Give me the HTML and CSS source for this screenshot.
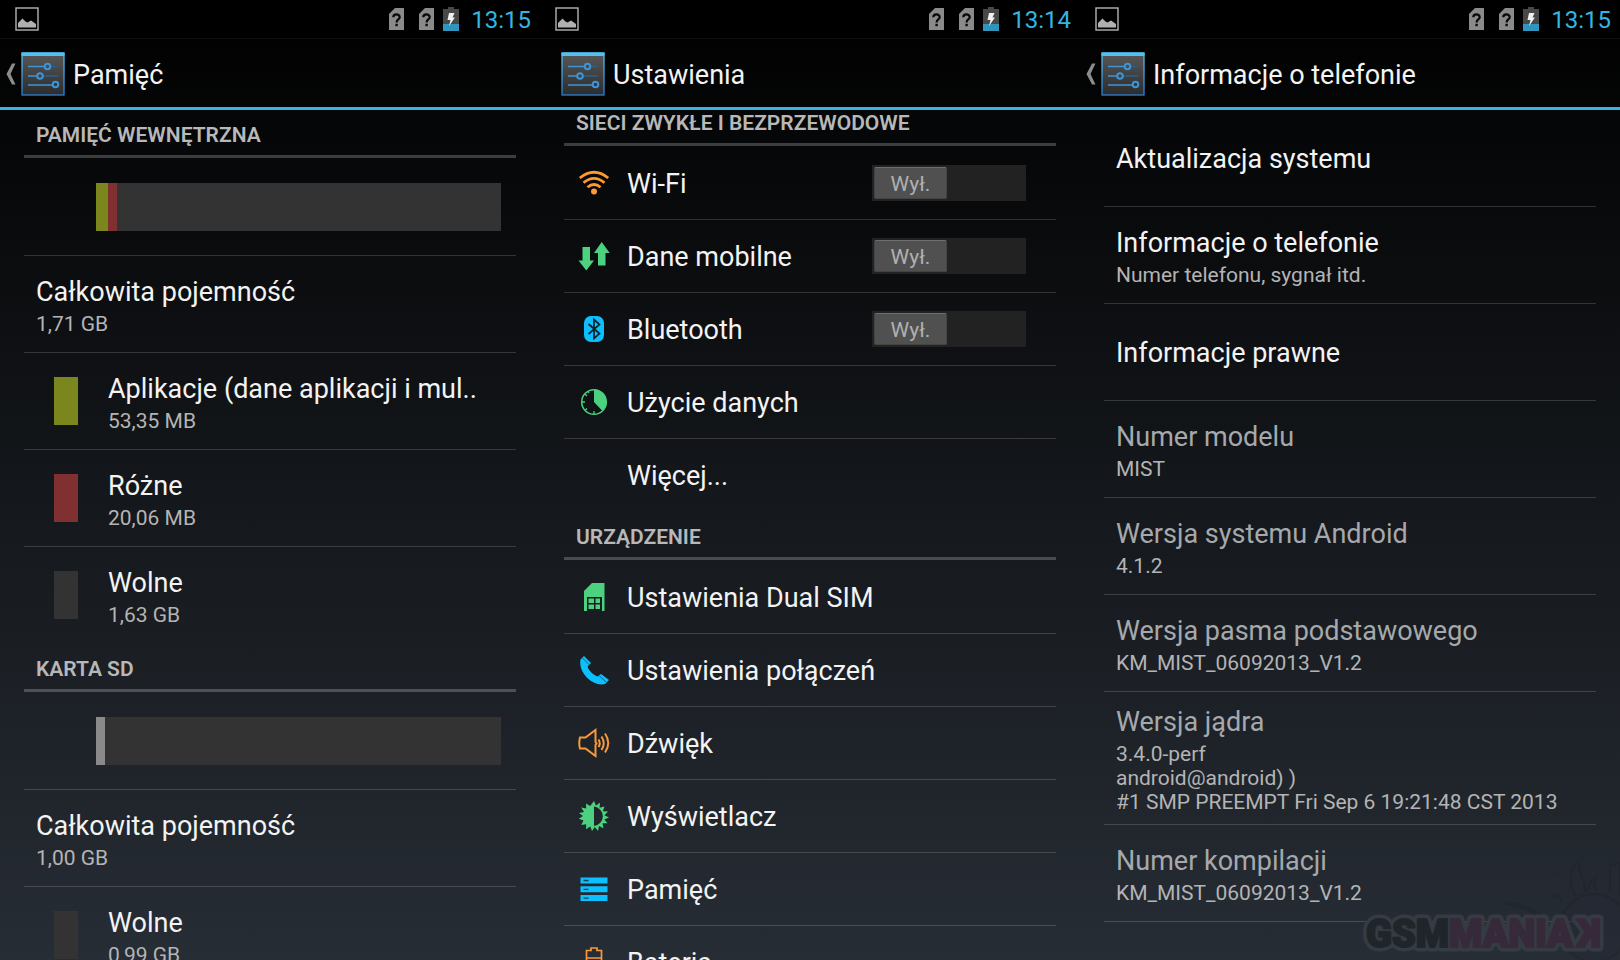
FILE: index.html
```html
<!DOCTYPE html>
<html lang="pl">
<head>
<meta charset="utf-8">
<title>Ustawienia</title>
<link rel="stylesheet" href="styles.css">
</head>
<body>
<svg class="defs" aria-hidden="true">
  <defs>
    <linearGradient id="g-tile" x1="0" y1="0" x2="0" y2="1"><stop offset="0" stop-color="#585858"/><stop offset="1" stop-color="#2c2c2c"/></linearGradient>
    <linearGradient id="g-edge" x1="0" y1="0" x2="0" y2="1"><stop offset="0" stop-color="#55c4f2"/><stop offset="1" stop-color="#2a7fd0"/></linearGradient>
    <symbol id="i-picture" viewBox="0 0 24 24"><rect x="1" y="1" width="22" height="22" fill="none" stroke="#b4b4b4" stroke-width="1.4"/><path d="M3 20.500V16l4.500-4.500 3 3 2 1 3.500-2 5 3.500v3.500z" fill="#b0b0b0"/></symbol>
    <symbol id="i-sim" viewBox="0 0 15 22"><path d="M6 0h9v22H0V6z" fill="#8a8a8a"/><path d="M4.300 9.200C4.300 5.400 10.700 5.400 10.700 9.200C10.700 11.600 7.600 11.400 7.600 14.400" fill="none" stroke="#080808" stroke-width="2.200"/><rect x="6.400" y="15.800" width="2.400" height="2.400" fill="#080808"/></symbol>
    <symbol id="i-charge" viewBox="0 0 16 24"><path d="M5 0h6v2h5v22H0V2h5z" fill="#484848"/><rect y="17" width="16" height="7" fill="#2f95bd"/><path d="M6 6h5.500L9.500 10.500H12L6 19l1.500-6H4.500z" fill="#f2f2f2"/></symbol>
    <symbol id="i-back" viewBox="0 0 10 22"><path d="M0.500 11L6 .5h3.500L4.500 11l5 10.500H6z" fill="#8c8c8c"/></symbol>
    <symbol id="i-app" viewBox="0 0 44 44"><rect x="1" y="1" width="42" height="42" fill="url(#g-tile)" stroke="url(#g-edge)" stroke-width="1.300"/><rect x=".5" y=".5" width="43" height="3.500" rx="1" fill="#52c1f0"/><g stroke-width="1.500" fill="none"><path d="M7 14.500h17M7 24h9.500M7 33h25" stroke="#3f94d6"/><path d="M30 14.500h7M22 24h15" stroke="#2a5f8c"/><g stroke="#3f94d6" stroke-width="2"><circle cx="26.500" cy="14.500" r="2.800"/><circle cx="19" cy="24" r="2.800"/><circle cx="34.500" cy="32.500" r="2.800"/></g></g></symbol>
    <symbol id="i-wifi" viewBox="0 0 32 32"><g fill="none" stroke="#ff9a2e" stroke-width="2.800"><path d="M1.800 11Q16 -.5 30.200 11"/><path d="M5.500 15.800Q16 7 26.500 15.800"/><path d="M9.500 20.300Q16 14.800 22.500 20.300"/></g><circle cx="16" cy="24.500" r="3" fill="#ff9a2e"/></symbol>
    <symbol id="i-data" viewBox="0 0 32 32"><path d="M4.500 7h7.500v13.500h4L8.300 30.500 .5 20.500h4zM20 25.500h7.500V13h4.200L23.700 2 16 13h4z" fill="#4bd17f"/></symbol>
    <symbol id="i-bt" viewBox="0 0 32 32"><rect x="6" y="3" width="20" height="26" rx="7" fill="#0cc0ff"/><path d="M10.500 11L21.500 20.500 16 25.500V6.500l5.500 5L10.500 21" fill="none" stroke="#10222c" stroke-width="1.700"/></symbol>
    <symbol id="i-usage" viewBox="0 0 32 32"><circle cx="16" cy="16" r="12.300" fill="none" stroke="#4bd17f" stroke-width="1.500"/><path d="M16 16V3.500A12.500 12.500 0 0 1 24.500 25z" fill="#4bd17f"/><path d="M4 16h3M16 28v-3M7 8l2 2M7 24.500l2-2M10 5l1 2" stroke="#4bd17f" stroke-width="1.300"/></symbol>
    <symbol id="i-dual" viewBox="0 0 32 32"><path d="M14 2h12.500v28H24V16H9v14H6V10z" fill="#4bd17f"/><path d="M10.500 17.500H16v4.500h-5.500zM17.500 17.500H22v4.500h-4.500zM10.500 23.500H16V28h-5.500zM17.500 23.500H22V28h-4.500z" fill="#4bd17f"/></symbol>
    <symbol id="i-phone" viewBox="0 0 32 32"><path d="M2.500 5.500L6 2l7 7-3.500 3.500C11 17 15 20.500 19.500 22.500L23 20l8 6-4 4C15 33 0 19 2.500 5.500z" fill="#0cc0ff"/><path d="M4.500 4l7 7M21 21.500l7 6.500" stroke="#1b4a5c" stroke-width=".8"/></symbol>
    <symbol id="i-sound" viewBox="0 0 32 32"><g fill="none" stroke="#f79a3a" stroke-width="2"><path d="M2 10.500Q.5 16 2 21.500H7.500L17.500 29V18l1-1.500-1-1.500V3L7.500 10.500z"/><path d="M20.500 12.500q2.500 4 0 7.500M23.500 9.500q4.500 7 0 13.500M27 6.500q6.500 9.500 0 19"/></g></symbol>
    <symbol id="i-display" viewBox="0 0 32 32"><path d="M16 1l1.900 4.600L22 2.800l-.4 5L26.500 6.600 24.800 11.300 30 11.600 26.500 15.200 31 17.400 26.300 19.400 29.500 23.300 24.500 23.300 25.500 28.200 21 26 20 31 16.800 27.100 14 31 12.300 26.500 8 29.200 8.200 24.200 3.200 25 5.500 20.400.8 18.800 5 16 1 13 6 12 3.200 7.500 8.200 8.400 8 3.400 12.200 6z" fill="#4bd17f"/><path d="M16 6.500a9.800 9.800 0 0 1 0 19.500z" fill="#20262b"/></symbol>
    <symbol id="i-storage" viewBox="0 0 32 32"><path d="M2.500 4.500h27v6h-27zM2.500 13.300h27v6h-27zM2.500 22.100h27v6h-27z" fill="#0cc0ff"/><path d="M5.500 7.500h5M5.500 16.300h5M5.500 25.100h5" stroke="#1c3f50" stroke-width="1.300"/></symbol>
    <symbol id="i-battery" viewBox="0 0 32 32"><path d="M8.500 31V4.500h4.500V2h6v2.500h4.500V31zM8.500 12h15" fill="none" stroke="#f79a3a" stroke-width="1.700"/></symbol>
  </defs>
</svg>

<main class="screens">
  <section class="screen">
    <div class="status">
      <svg class="st-picture"><use href="#i-picture"/></svg>
      <svg class="st-sim"><use href="#i-sim"/></svg>
      <svg class="st-sim"><use href="#i-sim"/></svg>
      <svg class="st-charge"><use href="#i-charge"/></svg>
      <time class="clock">13:15</time>
    </div>
    <header class="bar">
      <button class="up" aria-label="Wstecz"><svg class="back"><use href="#i-back"/></svg><svg class="app"><use href="#i-app"/></svg></button>
      <h1 class="heading">Pamięć</h1>
    </header>
    <div class="list">
      <h2 class="category">Pamięć wewnętrzna</h2>
      <div class="row usage-row"><div class="usage"><span class="part olive" style="width:3%"></span><span class="part red" style="width:2.2%"></span></div></div>
      <div class="row"><div class="text"><p class="title">Całkowita pojemność</p><p class="summary">1,71 GB</p></div></div>
      <div class="row"><span class="swatch olive"></span><div class="text"><p class="title">Aplikacje (dane aplikacji i mul..</p><p class="summary">53,35 MB</p></div></div>
      <div class="row"><span class="swatch red"></span><div class="text"><p class="title">Różne</p><p class="summary">20,06 MB</p></div></div>
      <div class="row last"><span class="swatch free"></span><div class="text"><p class="title">Wolne</p><p class="summary">1,63 GB</p></div></div>
      <h2 class="category">Karta SD</h2>
      <div class="row usage-row"><div class="usage"><span class="part grey" style="width:2.2%"></span></div></div>
      <div class="row"><div class="text"><p class="title">Całkowita pojemność</p><p class="summary">1,00 GB</p></div></div>
      <div class="row last"><span class="swatch free"></span><div class="text"><p class="title">Wolne</p><p class="summary">0,99 GB</p></div></div>
    </div>
  </section>

  <section class="screen">
    <div class="status">
      <svg class="st-picture"><use href="#i-picture"/></svg>
      <svg class="st-sim"><use href="#i-sim"/></svg>
      <svg class="st-sim"><use href="#i-sim"/></svg>
      <svg class="st-charge"><use href="#i-charge"/></svg>
      <time class="clock">13:14</time>
    </div>
    <header class="bar">
      <span class="up"><svg class="app"><use href="#i-app"/></svg></span>
      <h1 class="heading">Ustawienia</h1>
    </header>
    <div class="list scrolled">
      <h2 class="category">Sieci zwykłe i bezprzewodowe</h2>
      <div class="row short"><svg class="icon"><use href="#i-wifi"/></svg><p class="title" id="l-wifi">Wi-Fi</p><button class="switch" role="switch" aria-checked="false" aria-labelledby="l-wifi"><span class="thumb">Wył.</span></button></div>
      <div class="row short"><svg class="icon"><use href="#i-data"/></svg><p class="title" id="l-data">Dane mobilne</p><button class="switch" role="switch" aria-checked="false" aria-labelledby="l-data"><span class="thumb">Wył.</span></button></div>
      <div class="row short"><svg class="icon"><use href="#i-bt"/></svg><p class="title" id="l-bt">Bluetooth</p><button class="switch" role="switch" aria-checked="false" aria-labelledby="l-bt"><span class="thumb">Wył.</span></button></div>
      <div class="row short"><svg class="icon"><use href="#i-usage"/></svg><p class="title">Użycie danych</p></div>
      <div class="row short last"><span class="icon"></span><p class="title">Więcej...</p></div>
      <h2 class="category">Urządzenie</h2>
      <div class="row short"><svg class="icon"><use href="#i-dual"/></svg><p class="title">Ustawienia Dual SIM</p></div>
      <div class="row short"><svg class="icon"><use href="#i-phone"/></svg><p class="title">Ustawienia połączeń</p></div>
      <div class="row short"><svg class="icon"><use href="#i-sound"/></svg><p class="title">Dźwięk</p></div>
      <div class="row short"><svg class="icon"><use href="#i-display"/></svg><p class="title">Wyświetlacz</p></div>
      <div class="row short"><svg class="icon"><use href="#i-storage"/></svg><p class="title">Pamięć</p></div>
      <div class="row short last"><svg class="icon"><use href="#i-battery"/></svg><p class="title">Bateria</p></div>
    </div>
  </section>

  <section class="screen">
    <div class="status">
      <svg class="st-picture"><use href="#i-picture"/></svg>
      <svg class="st-sim"><use href="#i-sim"/></svg>
      <svg class="st-sim"><use href="#i-sim"/></svg>
      <svg class="st-charge"><use href="#i-charge"/></svg>
      <time class="clock">13:15</time>
    </div>
    <header class="bar">
      <button class="up" aria-label="Wstecz"><svg class="back"><use href="#i-back"/></svg><svg class="app"><use href="#i-app"/></svg></button>
      <h1 class="heading">Informacje o telefonie</h1>
    </header>
    <div class="list">
      <div class="row"><p class="title">Aktualizacja systemu</p></div>
      <div class="row"><div class="text"><p class="title">Informacje o telefonie</p><p class="summary">Numer telefonu, sygnał itd.</p></div></div>
      <div class="row"><p class="title">Informacje prawne</p></div>
      <div class="row dim"><div class="text"><p class="title">Numer modelu</p><p class="summary">MIST</p></div></div>
      <div class="row dim"><div class="text"><p class="title">Wersja systemu Android</p><p class="summary">4.1.2</p></div></div>
      <div class="row dim"><div class="text"><p class="title">Wersja pasma podstawowego</p><p class="summary">KM_MIST_06092013_V1.2</p></div></div>
      <div class="row dim"><div class="text"><p class="title">Wersja jądra</p><p class="summary">3.4.0-perf<br>android@android) )<br>#1 SMP PREEMPT Fri Sep 6 19:21:48 CST 2013</p></div></div>
      <div class="row dim"><div class="text"><p class="title">Numer kompilacji</p><p class="summary">KM_MIST_06092013_V1.2</p></div></div>
    </div>
    <svg class="watermark" viewBox="0 0 260 120" role="img" aria-label="GSMManiak">
      <g class="wm-splash"><circle cx="234" cy="88" r="34"/><path d="M216 56q-10-16-1-30 5-8 4 4 5 10 6 22M202 60q-8-8-10-2M180 74q-20-12-34-10 16 2 30 10M228 50q2-10 8-12-4 8 0 12M250 52V26l10-4v34M192 34h3"/></g>
      <g class="wm-outline"><text x="6" y="107">GSM</text><text x="89" y="107">MANIA</text><text x="-241" y="107" transform="scale(-1 1)">K</text></g>
      <g class="wm-face" aria-hidden="true"><text class="wm-dark" x="6" y="107">GSM</text><text x="89" y="107">MANIA</text><text x="-241" y="107" transform="scale(-1 1)">K</text></g>
    </svg>
  </section>
</main>
</body>
</html>
```
FILE: styles.css
```css
* { box-sizing: border-box; }
body { margin: 0; background: #000; color: #f3f3f3; font-family: Roboto, "Noto Sans", sans-serif; }
h1, h2, p { margin: 0; font-weight: 400; }
button { padding: 0; border: 0; background: none; color: inherit; font: inherit; }
svg { display: block; flex: none; }
.defs { position: absolute; width: 0; height: 0; }

.screens { display: grid; grid-template-columns: repeat(3, 1fr); height: 100vh; overflow: hidden; background: linear-gradient(#000, #272d35); }
.screen { position: relative; display: flex; flex-direction: column; min-width: 0; min-height: 0; overflow: hidden; }

.status { display: flex; align-items: center; flex: none; height: 39px; padding: 0 9px 0 15px; border-bottom: 1px solid #0e0e0e; background: #000; }
.st-picture { width: 24px; height: 24px; margin-right: auto; }
.st-sim { width: 15px; height: 22px; margin-right: 15px; }
.st-sim + .st-charge { margin-left: -6px; }
.st-charge { width: 16px; height: 24px; margin-right: 12px; }
.clock { padding-top: 2px; color: #33b5e5; font-size: 24px; line-height: 36px; }

.bar { display: flex; align-items: center; flex: none; height: 71px; border-bottom: 3px solid #33b5e5; }
.up { display: flex; align-items: center; justify-content: flex-end; width: 65px; height: 68px; padding-top: 2px; }
.back { width: 10px; height: 22px; margin-right: 5px; }
.app { width: 44px; height: 44px; }
.heading { padding: 4px 0 0 8px; font-size: 27px; line-height: 38px; }

.list { flex: 1; min-height: 0; padding: 0 24px; overflow: hidden; }
.scrolled .category:first-child { margin-top: -12px; }
.category { height: 48px; margin-bottom: 1px; padding-left: 12px; border-bottom: 3px solid rgba(255, 255, 255, .22); color: #b8b8b8; font-size: 21px; font-weight: 600; line-height: 50px; text-transform: uppercase; }
.row { display: flex; align-items: center; min-height: 97px; padding: 9px 15px 10px 12px; border-bottom: 1px solid rgba(255, 255, 255, .16); }
.row.last { border-bottom-color: transparent; }
.short { min-height: 73px; padding: 0 30px 1px 12px; }
.title { padding-top: 2px; font-size: 27px; line-height: 38px; white-space: nowrap; }
.summary { margin-top: 1px; color: #b4b4b4; font-size: 21px; line-height: 24px; white-space: nowrap; }
.dim .title { color: #a6a9ac; }

.usage-row { padding: 0 15px 0 72px; }
.usage { display: flex; flex: 1; height: 48px; background: #333; }
.swatch { flex: none; width: 24px; height: 48px; margin: 0 30px 0 18px; }
.olive { background: #7b861c; }
.red { background: #803030; }
.grey { background: #8a8a8a; }
.free { background: #333; }

.icon { flex: none; width: 32px; height: 32px; margin: 0 17px 0 2px; }
.switch { width: 154px; height: 36px; margin-left: auto; padding: 2px; background: #222; }
.thumb { display: block; width: 73px; height: 32px; border: 1px solid #444; border-top-color: #6e6e6e; border-radius: 2px; background: #505050; color: #b0b0b0; font-size: 21px; line-height: 32px; text-align: center; }

.watermark { position: absolute; right: 0; bottom: 0; width: 260px; height: 120px; font-size: 38px; font-weight: 900; }
.wm-splash { fill: #262934; stroke: #20242c; stroke-width: 2; opacity: .5; }
.wm-outline { fill: #353b42; stroke: #353b42; stroke-width: 9; stroke-linejoin: round; }
.wm-face { fill: #35293a; stroke: #35293a; stroke-width: 2; stroke-linejoin: round; }
.wm-dark { fill: #20252b; stroke: #20252b; }
```
